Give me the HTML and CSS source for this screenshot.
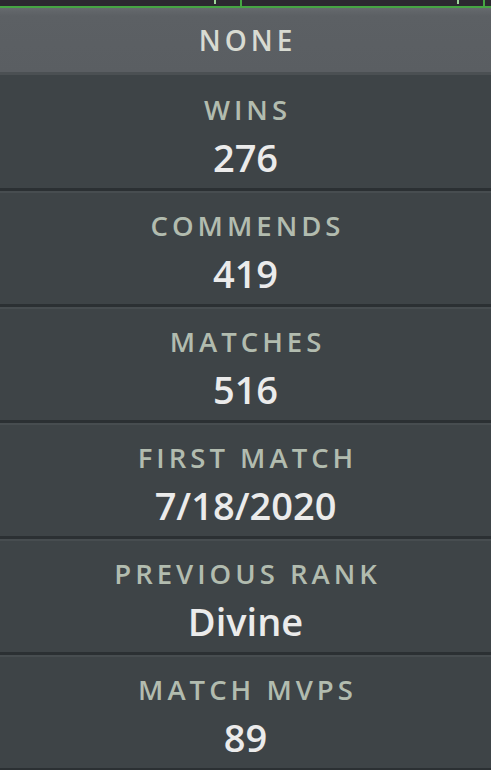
FILE: index.html
```html
<!DOCTYPE html>
<html lang="en">
<head>
<meta charset="utf-8">
<title>Profile Stats</title>
<link rel="stylesheet" href="styles.css">
</head>
<body>
  <div class="panel">
    <div class="topbar">
      <div class="slot"><span class="pip"></span></div>
      <div class="slot"><span class="pip"></span></div>
    </div>
    <div class="header">NONE</div>
    <ul class="stats">
      <li class="stat"><span class="label">WINS</span><span class="value">276</span></li>
      <li class="stat"><span class="label">COMMENDS</span><span class="value">419</span></li>
      <li class="stat"><span class="label">MATCHES</span><span class="value">516</span></li>
      <li class="stat"><span class="label">FIRST MATCH</span><span class="value">7/18/2020</span></li>
      <li class="stat"><span class="label">PREVIOUS RANK</span><span class="value">Divine</span></li>
      <li class="stat"><span class="label">MATCH MVPS</span><span class="value">89</span></li>
    </ul>
  </div>
</body>
</html>
```

FILE: styles.css
```css
html, body {
  margin: 0;
  padding: 0;
  background: #3e4447;
}

.panel {
  width: 491px;
  height: 770px;
  overflow: hidden;
  display: flex;
  flex-direction: column;
  font-family: "Open Sans", "Liberation Sans", sans-serif;
}

/* strip of the tab row above the panel */
.topbar {
  height: 6px;
  flex: none;
  display: grid;
  grid-template-columns: 242px 243px;
  background: #2c2830;
  border-bottom: 2px solid #46a443;
}

.slot {
  position: relative;
  border-right: 2px solid #46a443;
}

.pip {
  position: absolute;
  right: 24px;
  top: 0;
  width: 2px;
  height: 4px;
  background: #9fd59a;
}

.header {
  height: 64px;
  flex: none;
  display: flex;
  align-items: center;
  justify-content: center;
  background: linear-gradient(#65696d 0, #5c6064 8px, #5a5e62 100%);
  border-bottom: 3px solid #4b5053;
  color: #d8dbd2;
  font-size: 28px;
  font-weight: 600;
  letter-spacing: 4px;
  padding-left: 4px;
}

.stats {
  list-style: none;
  margin: 0;
  padding: 0;
  display: flex;
  flex-direction: column;
}

.stat {
  height: 113px;
  flex: none;
  display: flex;
  flex-direction: column;
  align-items: center;
  background: #3e4447;
  border-bottom: 3px solid #2b3033;
  box-shadow: inset 0 2px 0 #474d50;
}

.stats .stat:first-child {
  box-shadow: none;
}

.label {
  margin-top: 19px;
  height: 32px;
  line-height: 32px;
  color: #b2bcaf;
  font-size: 27.5px;
  font-weight: 600;
  letter-spacing: 4px;
  padding-left: 4px;
}

.value {
  margin-top: 6px;
  height: 50px;
  line-height: 50px;
  color: #ebebeb;
  font-size: 38px;
  font-weight: 600;
}
```
